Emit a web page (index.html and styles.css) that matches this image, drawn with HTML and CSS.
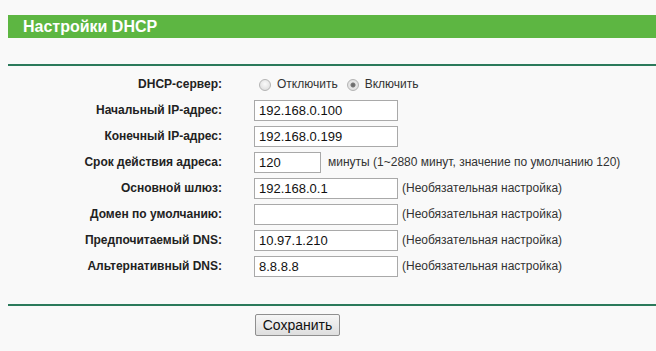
FILE: index.html
```html
<!doctype html>
<html>
<head>
  <meta charset="utf-8">
  <link rel="stylesheet" href="styles.css">
</head>
<body>
<div class="b-title">Настройки DHCP</div>
<div class="b-line"></div>
<div class="b-form">
  <div class="b-form_label">DHCP-сервер:</div>
  <div class="b-form_field">
    <label class="b-radio"><input type="radio" name="dhcp"> Отключить</label>
    <label class="b-radio"><input type="radio" name="dhcp" checked> Включить</label>
  </div>

  <div class="b-form_label">Начальный IP-адрес:</div>
  <div class="b-form_field"><input class="b-text" type="text" value="192.168.0.100"></div>

  <div class="b-form_label">Конечный IP-адрес:</div>
  <div class="b-form_field"><input class="b-text" type="text" value="192.168.0.199"></div>

  <div class="b-form_label">Срок действия адреса:</div>
  <div class="b-form_field"><input class="b-text b-text__short" type="text" value="120"><span class="b-note b-note__wide">минуты (1~2880 минут, значение по умолчанию 120)</span></div>

  <div class="b-form_label">Основной шлюз:</div>
  <div class="b-form_field"><input class="b-text" type="text" value="192.168.0.1"><span class="b-note">(Необязательная настройка)</span></div>

  <div class="b-form_label">Домен по умолчанию:</div>
  <div class="b-form_field"><input class="b-text" type="text" value=""><span class="b-note">(Необязательная настройка)</span></div>

  <div class="b-form_label">Предпочитаемый DNS:</div>
  <div class="b-form_field"><input class="b-text" type="text" value="10.97.1.210"><span class="b-note">(Необязательная настройка)</span></div>

  <div class="b-form_label">Альтернативный DNS:</div>
  <div class="b-form_field"><input class="b-text" type="text" value="8.8.8.8"><span class="b-note">(Необязательная настройка)</span></div>
</div>
<div class="b-line b-line__bottom"></div>
<div class="b-buttons">
  <button class="b-button" type="button">Сохранить</button>
</div>
</body>
</html>
```

FILE: styles.css
```css
body {
  margin : 15px 0 0 8px;
  background : #f9f9f9;
  font-family : "Liberation Sans", Arial, sans-serif;
  font-size : 12px;
  color : #000;
}
.b-title {
  height : 23px;
  line-height : 24px;
  padding-left : 15px;
  background : #5db642;
  color : #fff;
  font-size : 16px;
  font-weight : bold;
}
.b-line {
  margin-top : 26px;
  border-top : 2px solid #2b7a5b;
}
.b-line__bottom {
  margin-top : 25px;
}
.b-form {
  display : grid;
  grid-template-columns : 214px 1fr;
  column-gap : 32px;
  grid-auto-rows : 26px;
  padding-top : 5px;
}
.b-form_label {
  display : flex;
  align-items : center;
  justify-content : flex-end;
  font-weight : bold;
  font-size : 12px;
  color : #222;
}
.b-form_field {
  display : flex;
  align-items : center;
  font-size : 12px;
  color : #333;
}
.b-radio {
  display : flex;
  align-items : center;
  margin-right : 4px;
  font-size : 12px;
  color : #333;
}
.b-radio input {
  appearance : none;
  -webkit-appearance : none;
  width : 12px;
  height : 12px;
  margin : 2px 6px 0 5px;
  border : 1px solid #b4b4b4;
  border-radius : 50%;
  background : radial-gradient(circle at 50% 40%, #fafafa 0, #e2e2e2 70%, #d2d2d2 100%);
}
.b-radio input:checked {
  background : radial-gradient(circle, #666 0, #777 2px, #e8e8e8 3px, #d8d8d8 100%);
}
.b-text {
  box-sizing : border-box;
  width : 144px;
  height : 21px;
  margin : 0;
  padding : 0 4px;
  border : 1px solid #a9a9a9;
  background : #fff;
  font-family : "Liberation Sans", Arial, sans-serif;
  font-size : 13px;
  color : #111;
}
.b-text__short {
  width : 67px;
}
.b-note {
  margin-left : 4px;
  color : #333;
}
.b-note__wide {
  margin-left : 7px;
}
.b-buttons {
  padding : 8px 0 0 247px;
}
.b-button {
  width : 85px;
  height : 22px;
  padding : 0;
  border : 1px solid #8f8f8f;
  border-radius : 2px;
  background : linear-gradient(#f6f6f6, #dedede);
  font-family : "Liberation Sans", Arial, sans-serif;
  font-size : 14px;
  color : #111;
}
```
